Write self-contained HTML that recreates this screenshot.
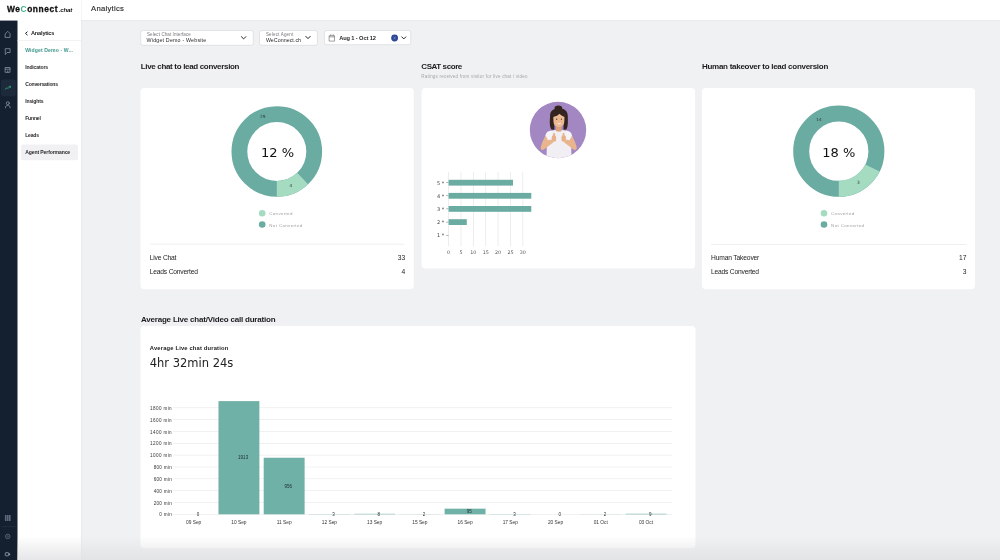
<!DOCTYPE html>
<html lang="en">
<head>
<meta charset="utf-8">
<title>Analytics</title>
<style>
*{box-sizing:border-box;margin:0;padding:0}
html,body{width:1000px;height:560px;overflow:hidden}
body{background:#f0f1f3;font-family:"Liberation Sans",sans-serif;color:#1d1d1f;position:relative}
#txt{position:absolute;left:0;top:0;width:1000px;height:560px;will-change:transform}
.t{position:absolute;white-space:nowrap;line-height:0}
.dv{font-family:"DejaVu Sans","Liberation Sans",sans-serif}
</style>
</head>
<body>
<svg id="art" width="1000" height="560" viewBox="0 0 1000 560" style="position:absolute;left:0;top:0">
<defs>
<linearGradient id="fadeg" x1="0" y1="0" x2="0" y2="1"><stop offset="0" stop-color="#dfe0e2" stop-opacity="0"/><stop offset="1" stop-color="#dfe0e2" stop-opacity="0.8"/></linearGradient>
<linearGradient id="hsh" x1="0" y1="0" x2="0" y2="1"><stop offset="0" stop-color="#000" stop-opacity="0.07"/><stop offset="1" stop-color="#000" stop-opacity="0"/></linearGradient>
<linearGradient id="ssh" x1="0" y1="0" x2="1" y2="0"><stop offset="0" stop-color="#000" stop-opacity="0.06"/><stop offset="1" stop-color="#000" stop-opacity="0"/></linearGradient>
<clipPath id="avc"><circle cx="28.2" cy="28.2" r="28.2"/></clipPath>
</defs>
<!-- header and sidebars -->
<rect x="81" y="20" width="919" height="1.6" fill="url(#hsh)"/>
<rect x="81" y="20" width="1.6" height="540" fill="url(#ssh)"/>
<rect x="0" y="0" width="1000" height="20.2" fill="#fff"/>
<rect x="81.2" y="0" width="0.6" height="20" fill="#f0f0f2"/>
<rect x="17" y="20" width="64.2" height="540" fill="#fff"/>
<rect x="0" y="20.6" width="17.5" height="540" fill="#14202f"/>
<!-- dark sidebar icons -->
<rect x="0.9" y="79.4" width="15" height="16.8" rx="2.6" fill="#1c2a3b"/>
<g fill="none" stroke="#8693a6" stroke-width="0.8" stroke-linejoin="round" stroke-linecap="round">
<path d="M5.45 33.7 L7.75 31.3 L10.05 33.700 V37.4 H5.45 Z"/>
<path d="M5.6 48.700 H10.100 V52.500 H7 L5.6 54.200 Z"/>
<path d="M5.5 67.5 H10 V72.3 H5.5 Z M5.5 69.2 H10 M7.75 70.8 V72.3"/>
<circle cx="7.8" cy="103.2" r="1.5"/><path d="M5.4 107.8 C5.4 106 6.6 105.4 7.8 105.4 C9 105.4 10.2 106 10.2 107.8"/>
</g>
<path d="M5.2 89.1 L6.9 87.9 L8 88.4 L10.200 86.500 M9.1 86.3 H10.4 V87.6" fill="none" stroke="#35b07c" stroke-width="0.75" stroke-linecap="round" stroke-linejoin="round"/>
<rect x="4.90" y="515.20" width="1.6" height="1.6" fill="#6f7d91"/><rect x="6.95" y="515.20" width="1.6" height="1.6" fill="#6f7d91"/><rect x="9.00" y="515.20" width="1.6" height="1.6" fill="#6f7d91"/><rect x="4.90" y="517.20" width="1.6" height="1.6" fill="#6f7d91"/><rect x="6.95" y="517.20" width="1.6" height="1.6" fill="#6f7d91"/><rect x="9.00" y="517.20" width="1.6" height="1.6" fill="#6f7d91"/><rect x="4.90" y="519.20" width="1.6" height="1.6" fill="#6f7d91"/><rect x="6.95" y="519.20" width="1.6" height="1.6" fill="#6f7d91"/><rect x="9.00" y="519.20" width="1.6" height="1.6" fill="#6f7d91"/>
<rect x="1.5" y="526.5" width="14" height="0.6" fill="#27374b"/>
<circle cx="7.7" cy="536.4" r="2.3" fill="none" stroke="#5f6d81" stroke-width="0.8"/><circle cx="7.7" cy="536.4" r="0.8" fill="none" stroke="#5f6d81" stroke-width="0.6"/>
<rect x="5.3" y="552.7" width="3.4" height="3.1" rx="0.5" fill="none" stroke="#98a3b3" stroke-width="0.8"/><path d="M8.9 553.1 L10.6 554.25 L8.9 555.4 Z" fill="#98a3b3"/>
<!-- side menu -->
<path d="M27.2 31.9 L25.5 33.4 L27.2 34.900" fill="none" stroke="#222" stroke-width="1" stroke-linecap="round" stroke-linejoin="round"/>
<rect x="17.4" y="40.4" width="63.8" height="0.6" fill="#ebebed"/>
<rect x="21" y="144.5" width="57" height="15.7" rx="2.5" fill="#f1f1f3"/>
<!-- filters -->
<rect x="140.7" y="30.5" width="112.6" height="14.8" rx="2.4" fill="#fff" stroke="#d9dade" stroke-width="0.7"/>
<rect x="259.5" y="30.5" width="57.9" height="14.8" rx="2.4" fill="#fff" stroke="#d9dade" stroke-width="0.7"/>
<rect x="324.4" y="30.5" width="86.4" height="14.2" rx="2.4" fill="#fff" stroke="#d9dade" stroke-width="0.7"/>
<path d="M241.40 36.70 L243.60 38.90 L245.80 36.70" fill="none" stroke="#222" stroke-width="1.0" stroke-linecap="round" stroke-linejoin="round"/>
<path d="M305.80 36.40 L308.00 38.60 L310.20 36.40" fill="none" stroke="#222" stroke-width="1.0" stroke-linecap="round" stroke-linejoin="round"/>
<path d="M401.80 36.90 L403.80 38.90 L405.80 36.90" fill="none" stroke="#222" stroke-width="1.0" stroke-linecap="round" stroke-linejoin="round"/>
<path d="M329.5 35.7 H334.5 V41.1 H329.5 Z M329.5 36.9 H334.5 M330.8 34.6 V35.7 M333.2 34.6 V35.700" fill="none" stroke="#666" stroke-width="0.6" stroke-linejoin="round" stroke-linecap="round"/>
<circle cx="394.6" cy="38" r="3.4" fill="#2b4692"/><path d="M393.8 37.2 L395.4 38.8 M395.4 37.2 L393.8 38.8" stroke="#c5cfea" stroke-width="0.45" stroke-linecap="round"/>
<!-- cards -->
<rect x="140.5" y="88" width="273.3" height="201.3" rx="4" fill="#fff"/>
<rect x="421.6" y="88" width="273.5" height="180.4" rx="4" fill="#fff"/>
<rect x="702" y="88" width="273.0" height="201.3" rx="4" fill="#fff"/>
<rect x="140.4" y="325.9" width="555.1" height="222.3" rx="4" fill="#fff"/>
<rect x="150.2" y="243.8" width="254.200" height="0.6" fill="#e4e4e6"/>
<rect x="711" y="244.300" width="255.4" height="0.6" fill="#e4e4e6"/>
<!-- donut charts -->
<circle cx="276.8" cy="151.5" r="37.40" fill="none" stroke="#6aaba2" stroke-width="15.80"/><path d="M308.06 184.29 A45.3 45.3 0 0 1 276.80 196.80 L276.80 181.00 A29.5 29.5 0 0 0 297.16 172.85 Z" fill="#a5dcc1"/>
<circle cx="838.8" cy="151.2" r="37.60" fill="none" stroke="#6aaba2" stroke-width="16.00"/><path d="M879.62 171.53 A45.6 45.6 0 0 1 838.80 196.80 L838.80 180.80 A29.6 29.6 0 0 0 865.30 164.39 Z" fill="#a5dcc1"/>
<circle cx="262.2" cy="213.2" r="3.3" fill="#a5dcc1"/><circle cx="262.2" cy="224.5" r="3.3" fill="#6aaba2"/>
<circle cx="824" cy="213.2" r="3.3" fill="#a5dcc1"/><circle cx="824" cy="224.500" r="3.3" fill="#6aaba2"/>
<!-- csat chart -->
<rect x="448.25" y="171.8" width="0.7" height="74.5" fill="#e6e6e8"/>
<rect x="460.62" y="171.8" width="0.7" height="74.5" fill="#e6e6e8"/>
<rect x="472.99" y="171.8" width="0.7" height="74.5" fill="#e6e6e8"/>
<rect x="485.36" y="171.8" width="0.7" height="74.5" fill="#e6e6e8"/>
<rect x="497.73" y="171.8" width="0.7" height="74.5" fill="#e6e6e8"/>
<rect x="510.10" y="171.8" width="0.7" height="74.5" fill="#e6e6e8"/>
<rect x="522.47" y="171.8" width="0.7" height="74.5" fill="#e6e6e8"/>
<rect x="446.2" y="182.45" width="2.3" height="0.5" fill="#666"/>
<rect x="448.6" y="179.80" width="64.40" height="5.8" fill="#6aaba2"/>
<rect x="446.2" y="195.55" width="2.3" height="0.5" fill="#666"/>
<rect x="448.6" y="192.90" width="82.70" height="5.8" fill="#6aaba2"/>
<rect x="446.2" y="208.65" width="2.3" height="0.5" fill="#666"/>
<rect x="448.6" y="206.00" width="82.70" height="5.8" fill="#6aaba2"/>
<rect x="446.2" y="221.85" width="2.3" height="0.5" fill="#666"/>
<rect x="448.6" y="219.20" width="18.20" height="5.8" fill="#6aaba2"/>
<rect x="446.2" y="235.15" width="2.3" height="0.5" fill="#666"/>
<!-- avatar -->
<g transform="translate(529.8 101.8)">
<circle cx="28.2" cy="28.2" r="28.2" fill="#a387c3"/>
<g clip-path="url(#avc)"><g transform="translate(0.7 0)">
<path d="M16 57 L16.5 36 C17 30.5 21 28.5 25 28.3 L31.5 28.3 C36 28.500 40 30.5 40.5 36 L41 57 Z" fill="#f1eff3"/>
<path d="M19.5 36 L15 33.5 C13 38 10.5 43 10.2 46 C10 48 12 48.6 13.5 47.6 L23 40.5 Z" fill="#e9b58e"/>
<path d="M37 36 L41.5 33.5 C43.5 38 46 43 46.2 46 C46.4 48 44.4 48.6 43 47.6 L33.5 40.5 Z" fill="#e9b58e"/>
<path d="M15 33.8 C15.5 30.5 18 29 21 28.8 L22 37.5 L17.5 38.5 Z" fill="#f6f4f8"/>
<path d="M41.5 33.8 C41 30.5 38.5 29 35.5 28.8 L34.5 37.5 L39 38.5 Z" fill="#f6f4f8"/>
<rect x="21.2" y="33.4" width="4.4" height="6.6" rx="2" fill="#e7b088"/>
<rect x="22.6" y="31.2" width="1.9" height="4" rx="0.95" fill="#e7b088"/>
<rect x="31" y="33.4" width="4.4" height="6.6" rx="2" fill="#e7b088"/>
<rect x="32.1" y="31.2" width="1.9" height="4" rx="0.95" fill="#e7b088"/>
<path d="M25.8 20 L30.8 20 L31.2 29 C30 30.2 26.6 30.2 25.4 29 Z" fill="#dca37c"/>
<g transform="translate(28.5 15.8) scale(1.1) translate(-28.4 -14.8)">
<path d="M20.3 13 C20.3 8 24 6.200 28.4 6.200 C33 6.200 36.4 8.500 36.4 13.500 C36.4 17.500 37 22 35.2 25.6 L32.500 25.8 L32.500 20 L24.200 20 L24.200 25.8 L21.500 25.600 C19.200 22 20.3 17 20.3 13 Z" fill="#33241f"/>
<ellipse cx="27.800" cy="6.100" rx="3.500" ry="2.400" fill="#33241f"/>
<path d="M23.200 13.600 C23.200 11.200 25.400 10.200 28.400 10.200 C31.400 10.200 33.400 11.200 33.400 13.600 L33.200 18.800 C33 21.800 31 23.400 28.300 23.400 C25.600 23.400 23.600 21.800 23.400 18.800 Z" fill="#ecb992"/>
<path d="M22.600 14.400 C22.600 10.800 25 9.400 28.400 9.400 C31.800 9.400 34 10.800 34 14.400 C32 13.800 30 12.800 28.800 11.400 C27.400 13 25 14 22.600 14.400 Z" fill="#33241f"/>
<path d="M26.600 19.200 C27.600 20.400 29.400 20.400 30.400 19.200 C29.800 21.300 27.200 21.300 26.600 19.200 Z" fill="#fff"/>
<circle cx="26.300" cy="16.200" r="0.500" fill="#33241f"/><circle cx="30.600" cy="16.200" r="0.500" fill="#33241f"/>
</g>
</g></g></g>
<!-- duration chart -->
<rect x="173.3" y="514.00" width="498.7" height="0.6" fill="#e8e8ea"/>
<rect x="173.3" y="502.17" width="498.7" height="0.6" fill="#e8e8ea"/>
<rect x="173.3" y="490.33" width="498.7" height="0.6" fill="#e8e8ea"/>
<rect x="173.3" y="478.50" width="498.7" height="0.6" fill="#e8e8ea"/>
<rect x="173.3" y="466.67" width="498.7" height="0.6" fill="#e8e8ea"/>
<rect x="173.3" y="454.83" width="498.7" height="0.6" fill="#e8e8ea"/>
<rect x="173.3" y="443.00" width="498.7" height="0.6" fill="#e8e8ea"/>
<rect x="173.3" y="431.17" width="498.7" height="0.6" fill="#e8e8ea"/>
<rect x="173.3" y="419.34" width="498.7" height="0.6" fill="#e8e8ea"/>
<rect x="173.3" y="407.50" width="498.7" height="0.6" fill="#e8e8ea"/>
<rect x="218.48" y="401.11" width="40.9" height="113.19" fill="#6fb0a7"/>
<rect x="263.71" y="457.74" width="40.9" height="56.56" fill="#6fb0a7"/>
<rect x="308.94" y="514.12" width="40.9" height="0.18" fill="#6fb0a7"/>
<rect x="354.17" y="513.83" width="40.9" height="0.47" fill="#6fb0a7"/>
<rect x="399.40" y="514.18" width="40.9" height="0.12" fill="#6fb0a7"/>
<rect x="444.63" y="508.68" width="40.9" height="5.62" fill="#6fb0a7"/>
<rect x="489.86" y="514.12" width="40.9" height="0.18" fill="#6fb0a7"/>
<rect x="580.32" y="514.18" width="40.9" height="0.12" fill="#6fb0a7"/>
<rect x="625.55" y="513.77" width="40.9" height="0.53" fill="#6fb0a7"/>
<rect x="17.4" y="536" width="982.6" height="24" fill="url(#fadeg)"/>
</svg>

<!-- text -->
<div id="txt">
<div class="t" id="logo" style="top:9.25px;font-size:8.4px;color:#111;font-weight:700;left:7px;letter-spacing:0.562px;-webkit-text-stroke:0.3px #111;">We<span style="color:#3fb48c;-webkit-text-stroke:0">C</span>onnect</div>
<div class="t" id="logo2" style="top:9.75px;font-size:6.2px;color:#111;font-weight:700;left:58.8px;letter-spacing:-0.211px;font-style:italic;">.chat</div>
<div class="t" id="title" style="top:8.75px;font-size:7.7px;color:#2c2c2e;left:91px;letter-spacing:0.270px;-webkit-text-stroke:0.15px #2c2c2e;">Analytics</div>
<div class="t" id="sa" style="top:33.25px;font-size:5.6px;color:#222;font-weight:700;left:31px;letter-spacing:-0.186px;">Analytics</div>
<div class="t" id="m0" style="top:50.25px;font-size:5.1px;color:#3f968b;font-weight:700;left:25.2px;letter-spacing:0.111px;">Widget Demo - W...</div>
<div class="t" id="m1" style="top:67.25px;font-size:5.1px;color:#2a2a2c;font-weight:700;left:25.2px;letter-spacing:-0.164px;">Indicators</div>
<div class="t" id="m2" style="top:84.25px;font-size:5.1px;color:#2a2a2c;font-weight:700;left:25.2px;letter-spacing:-0.207px;">Conversations</div>
<div class="t" id="m3" style="top:101.25px;font-size:5.1px;color:#2a2a2c;font-weight:700;left:25.2px;letter-spacing:-0.154px;">Insights</div>
<div class="t" id="m4" style="top:118.25px;font-size:5.1px;color:#2a2a2c;font-weight:700;left:25.2px;letter-spacing:-0.201px;">Funnel</div>
<div class="t" id="m5" style="top:135.25px;font-size:5.1px;color:#2a2a2c;font-weight:700;left:25.2px;letter-spacing:-0.207px;">Leads</div>
<div class="t" id="m6" style="top:152.25px;font-size:5.1px;color:#2a2a2c;font-weight:700;left:25.2px;letter-spacing:-0.124px;">Agent Performance</div>
<div class="t" id="f1l" style="top:34.75px;font-size:4.5px;color:#77787c;left:147px;letter-spacing:0.089px;">Select Chat Interface</div>
<div class="t" id="f1v" style="top:40.25px;font-size:5.3px;color:#2a2a2c;left:146.6px;letter-spacing:0.188px;">Widget Demo - Website</div>
<div class="t" id="f2l" style="top:34.75px;font-size:4.5px;color:#77787c;left:265.9px;letter-spacing:0.185px;">Select Agent</div>
<div class="t" id="f2v" style="top:40.25px;font-size:5.3px;color:#2a2a2c;left:265.9px;letter-spacing:0.045px;">WeConnect.ch</div>
<div class="t" id="f3v" style="top:38.25px;font-size:5.7px;color:#2a2a2c;font-weight:700;left:339.2px;letter-spacing:-0.118px;">Aug 1 - Oct 12</div>
<div class="t" id="h1" style="top:66.75px;font-size:8px;color:#1c1c1e;font-weight:700;left:140.7px;letter-spacing:-0.325px;">Live chat to lead conversion</div>
<div class="t" id="h2" style="top:66.75px;font-size:8px;color:#1c1c1e;font-weight:700;left:421.3px;letter-spacing:-0.417px;">CSAT score</div>
<div class="t" id="h2s" style="top:76.75px;font-size:4.5px;color:#a5a6a9;left:421.3px;letter-spacing:0.213px;">Ratings received from visitor for live chat / video</div>
<div class="t" id="h3" style="top:66.75px;font-size:8px;color:#1c1c1e;font-weight:700;left:702px;letter-spacing:-0.277px;">Human takeover to lead conversion</div>
<div class="t" id="h4" style="top:319.75px;font-size:8px;color:#1c1c1e;font-weight:700;left:141px;letter-spacing:-0.203px;">Average Live chat/Video call duration</div>
<div class="t dv" id="d1" style="top:152.75px;font-size:13px;color:#111;left:277.5px;transform:translateX(-50%);">12 %</div>
<div class="t dv" id="d1a" style="top:116.75px;font-size:4.3px;color:#2b3d3a;left:262.75px;transform:translateX(-50%);">29</div>
<div class="t dv" id="d1b" style="top:185.75px;font-size:4.3px;color:#2b3d3a;left:290.75px;transform:translateX(-50%);">4</div>
<div class="t" id="l1a" style="top:213.75px;font-size:4.4px;color:#a0a1a4;left:269.3px;letter-spacing:0.348px;">Converted</div>
<div class="t" id="l1b" style="top:225.75px;font-size:4.4px;color:#a0a1a4;left:269.3px;letter-spacing:0.384px;">Not Converted</div>
<div class="t" id="r1a" style="top:257.75px;font-size:6.7px;color:#222;left:149.8px;letter-spacing:-0.207px;">Live Chat</div>
<div class="t" id="r1av" style="top:257.75px;font-size:6.7px;color:#222;right:594.8px;">33</div>
<div class="t" id="r1b" style="top:271.75px;font-size:6.7px;color:#222;left:149.8px;letter-spacing:-0.203px;">Leads Converted</div>
<div class="t" id="r1bv" style="top:271.75px;font-size:6.7px;color:#222;right:594.8px;">4</div>
<div class="t dv" id="d3" style="top:152.75px;font-size:13px;color:#111;left:838.8px;transform:translateX(-50%);">18 %</div>
<div class="t dv" id="d3a" style="top:119.75px;font-size:4.3px;color:#2b3d3a;left:819px;transform:translateX(-50%);">14</div>
<div class="t dv" id="d3b" style="top:182.75px;font-size:4.3px;color:#2b3d3a;left:858.4px;transform:translateX(-50%);">3</div>
<div class="t" id="l3a" style="top:213.75px;font-size:4.4px;color:#a0a1a4;left:831.1px;letter-spacing:0.348px;">Converted</div>
<div class="t" id="l3b" style="top:225.75px;font-size:4.4px;color:#a0a1a4;left:831.1px;letter-spacing:0.384px;">Not Converted</div>
<div class="t" id="r3a" style="top:257.75px;font-size:6.7px;color:#222;left:711px;letter-spacing:-0.160px;">Human Takeover</div>
<div class="t" id="r3av" style="top:257.75px;font-size:6.7px;color:#222;right:33.5px;">17</div>
<div class="t" id="r3b" style="top:271.75px;font-size:6.7px;color:#222;left:711px;letter-spacing:-0.203px;">Leads Converted</div>
<div class="t" id="r3bv" style="top:271.75px;font-size:6.7px;color:#222;right:33.5px;">3</div>
<div class="t dv" id="cy0" style="top:183.25px;font-size:5px;color:#444;right:555.8px;">5 *</div>
<div class="t dv" id="cy1" style="top:196.25px;font-size:5px;color:#444;right:555.8px;">4 *</div>
<div class="t dv" id="cy2" style="top:209.25px;font-size:5px;color:#444;right:555.8px;">3 *</div>
<div class="t dv" id="cy3" style="top:222.25px;font-size:5px;color:#444;right:555.8px;">2 *</div>
<div class="t dv" id="cy4" style="top:235.25px;font-size:5px;color:#444;right:555.8px;">1 *</div>
<div class="t dv" id="cx0" style="top:252.75px;font-size:4.8px;color:#555;left:448.6px;transform:translateX(-50%);">0</div>
<div class="t dv" id="cx1" style="top:252.75px;font-size:4.8px;color:#555;left:460.97px;transform:translateX(-50%);">5</div>
<div class="t dv" id="cx2" style="top:252.75px;font-size:4.8px;color:#555;left:473.34000000000003px;transform:translateX(-50%);">10</div>
<div class="t dv" id="cx3" style="top:252.75px;font-size:4.8px;color:#555;left:485.71000000000004px;transform:translateX(-50%);">15</div>
<div class="t dv" id="cx4" style="top:252.75px;font-size:4.8px;color:#555;left:498.08000000000004px;transform:translateX(-50%);">20</div>
<div class="t dv" id="cx5" style="top:252.75px;font-size:4.8px;color:#555;left:510.45000000000005px;transform:translateX(-50%);">25</div>
<div class="t dv" id="cx6" style="top:252.75px;font-size:4.8px;color:#555;left:522.82px;transform:translateX(-50%);">30</div>
<div class="t" id="b1" style="top:348.25px;font-size:5.8px;color:#222;font-weight:700;left:149.8px;letter-spacing:0.169px;">Average Live chat duration</div>
<div class="t dv" id="b2" style="top:363.25px;font-size:11.5px;color:#222;left:149.7px;">4hr 32min 24s</div>
<div class="t" id="by0" style="top:514.75px;font-size:4.6px;color:#333;right:828px;letter-spacing:0.293px;">0 min</div>
<div class="t" id="by1" style="top:503.75px;font-size:4.6px;color:#333;right:828px;letter-spacing:0.279px;">200 min</div>
<div class="t" id="by2" style="top:491.75px;font-size:4.6px;color:#333;right:828px;letter-spacing:0.279px;">400 min</div>
<div class="t" id="by3" style="top:479.75px;font-size:4.6px;color:#333;right:828px;letter-spacing:0.279px;">600 min</div>
<div class="t" id="by4" style="top:467.75px;font-size:4.6px;color:#333;right:828px;letter-spacing:0.279px;">800 min</div>
<div class="t" id="by5" style="top:455.75px;font-size:4.6px;color:#333;right:828px;letter-spacing:0.374px;">1000 min</div>
<div class="t" id="by6" style="top:443.75px;font-size:4.6px;color:#333;right:828px;letter-spacing:0.374px;">1200 min</div>
<div class="t" id="by7" style="top:432.75px;font-size:4.6px;color:#333;right:828px;letter-spacing:0.374px;">1400 min</div>
<div class="t" id="by8" style="top:420.75px;font-size:4.6px;color:#333;right:828px;letter-spacing:0.374px;">1600 min</div>
<div class="t" id="by9" style="top:408.75px;font-size:4.6px;color:#333;right:828px;letter-spacing:0.374px;">1800 min</div>
<div class="t" id="bx0" style="top:522.75px;font-size:4.8px;color:#333;left:193.7px;transform:translateX(-50%);">09 Sep</div>
<div class="t" id="bv0" style="top:514.75px;font-size:4.5px;color:#1f2d2b;left:197.89999999999998px;transform:translateX(-50%);">0</div>
<div class="t" id="bx1" style="top:522.75px;font-size:4.8px;color:#333;left:238.92999999999998px;transform:translateX(-50%);">10 Sep</div>
<div class="t" id="bv1" style="top:457.75px;font-size:4.5px;color:#1f2d2b;left:243.12999999999997px;transform:translateX(-50%);">1913</div>
<div class="t" id="bx2" style="top:522.75px;font-size:4.8px;color:#333;left:284.15999999999997px;transform:translateX(-50%);">11 Sep</div>
<div class="t" id="bv2" style="top:486.75px;font-size:4.5px;color:#1f2d2b;left:288.35999999999996px;transform:translateX(-50%);">956</div>
<div class="t" id="bx3" style="top:522.75px;font-size:4.8px;color:#333;left:329.39px;transform:translateX(-50%);">12 Sep</div>
<div class="t" id="bv3" style="top:514.75px;font-size:4.5px;color:#1f2d2b;left:333.59px;transform:translateX(-50%);">3</div>
<div class="t" id="bx4" style="top:522.75px;font-size:4.8px;color:#333;left:374.62px;transform:translateX(-50%);">13 Sep</div>
<div class="t" id="bv4" style="top:514.75px;font-size:4.5px;color:#1f2d2b;left:378.82px;transform:translateX(-50%);">8</div>
<div class="t" id="bx5" style="top:522.75px;font-size:4.8px;color:#333;left:419.84999999999997px;transform:translateX(-50%);">15 Sep</div>
<div class="t" id="bv5" style="top:514.75px;font-size:4.5px;color:#1f2d2b;left:424.04999999999995px;transform:translateX(-50%);">2</div>
<div class="t" id="bx6" style="top:522.75px;font-size:4.8px;color:#333;left:465.08px;transform:translateX(-50%);">16 Sep</div>
<div class="t" id="bv6" style="top:511.75px;font-size:4.5px;color:#1f2d2b;left:469.28px;transform:translateX(-50%);">95</div>
<div class="t" id="bx7" style="top:522.75px;font-size:4.8px;color:#333;left:510.30999999999995px;transform:translateX(-50%);">17 Sep</div>
<div class="t" id="bv7" style="top:514.75px;font-size:4.5px;color:#1f2d2b;left:514.51px;transform:translateX(-50%);">3</div>
<div class="t" id="bx8" style="top:522.75px;font-size:4.8px;color:#333;left:555.54px;transform:translateX(-50%);">20 Sep</div>
<div class="t" id="bv8" style="top:514.75px;font-size:4.5px;color:#1f2d2b;left:559.74px;transform:translateX(-50%);">0</div>
<div class="t" id="bx9" style="top:522.75px;font-size:4.8px;color:#333;left:600.77px;transform:translateX(-50%);">01 Oct</div>
<div class="t" id="bv9" style="top:514.75px;font-size:4.5px;color:#1f2d2b;left:604.97px;transform:translateX(-50%);">2</div>
<div class="t" id="bx10" style="top:522.75px;font-size:4.8px;color:#333;left:646.0px;transform:translateX(-50%);">03 Oct</div>
<div class="t" id="bv10" style="top:514.75px;font-size:4.5px;color:#1f2d2b;left:650.2px;transform:translateX(-50%);">9</div>
</div>
</body>
</html>
